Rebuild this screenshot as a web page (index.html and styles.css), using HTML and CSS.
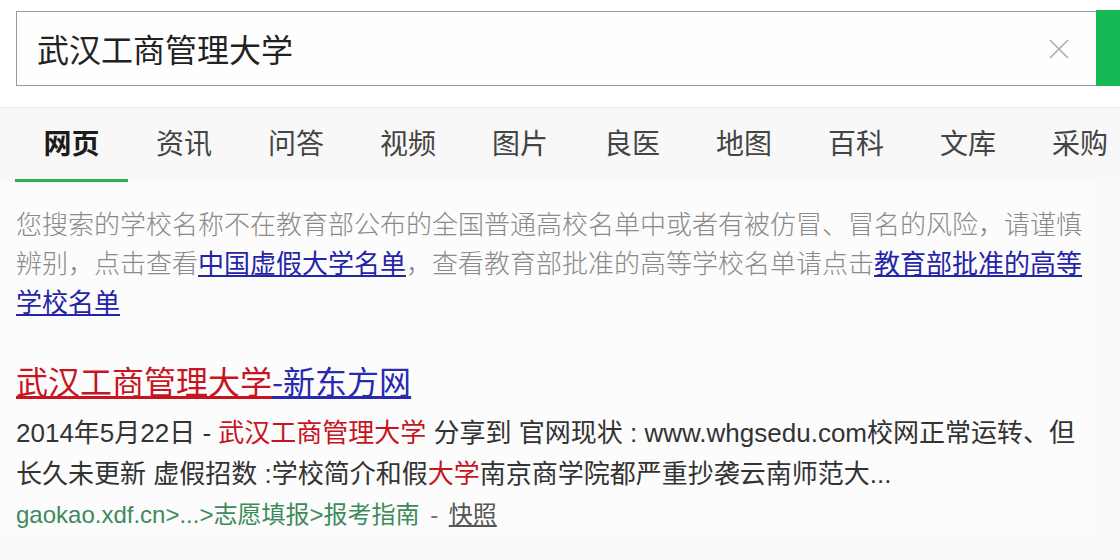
FILE: index.html
```html
<!DOCTYPE html>
<html lang="zh-CN">
<head>
  <meta charset="UTF-8" />
  <meta name="viewport" content="width=device-width, initial-scale=1" />
  <title>武汉工商管理大学 - 搜索</title>
  <link rel="stylesheet" href="styles.css">
</head>
<body>

  <div class="top">
    <div class="search">
      <div class="search-box">
        <span class="query">武汉工商管理大学</span>
        <svg class="clear" width="22" height="22" viewBox="0 0 22 22">
          <path d="M2 2 L20 20 M20 2 L2 20" stroke="#aaa" stroke-width="1.6" fill="none" />
        </svg>
      </div>
      <div class="search-btn"></div>
    </div>
  </div>

  <div class="tabs">
    <a class="tab active">网页</a>
    <a class="tab">资讯</a>
    <a class="tab">问答</a>
    <a class="tab">视频</a>
    <a class="tab">图片</a>
    <a class="tab">良医</a>
    <a class="tab">地图</a>
    <a class="tab">百科</a>
    <a class="tab">文库</a>
    <a class="tab">采购</a>
  </div>

  <div class="content">
    <p class="notice">
      您搜索的学校名称不在教育部公布的全国普通高校名单中或者有被仿冒、冒名的风险，请谨慎辨别，点击查看<a class="link">中国虚假大学名单</a>，查看教育部批准的高等学校名单请点击<a class="link">教育部批准的高等学校名单</a>
    </p>

    <div class="result">
      <a class="result-title"><em>武汉工商管理大学</em>-新东方网</a>
      <p class="snippet">
        2014年5月22日 - <em>武汉工商管理大学</em> 分享到 官网现状 : www.whgsedu.com校网正常运转、但长久未更新 虚假招数 :学校简介和假<em>大学</em>南京商学院都严重抄袭云南师范大...
      </p>
      <div class="source">
        <span class="url">gaokao.xdf.cn&gt;...&gt;志愿填报&gt;报考指南</span>
        <span class="dash">-</span>
        <a class="snapshot">快照</a>
      </div>
    </div>
  </div>

</body>
</html>
```

FILE: styles.css
```css
body {
  margin: 0;
  background: #fafafa;
  color: #333;
  font-family: "Liberation Sans", "Noto Sans CJK SC", sans-serif;
  overflow: hidden;
}

a {
  cursor: pointer;
}

.top {
  background: #fff;
  padding-top: 10px;
  height: 97px;
  border-bottom: 1px solid #ebebeb;
}

.search {
  display: flex;
  margin-left: 16px;
}

.search-box {
  box-sizing: border-box;
  width: 1080px;
  height: 75px;
  margin-top: 1px;
  border: 1px solid #9a9a9a;
  border-right: none;
  background: #fefefe;
  display: flex;
  align-items: center;
  justify-content: space-between;
  padding: 0 26px 0 20px;
}

.query {
  font-family: "Noto Sans CJK SC", sans-serif;
  font-size: 32px;
  color: #222;
  line-height: 40px;
  margin-top: -2px;
}

.clear {
  display: block;
}

.search-btn {
  width: 24px;
  height: 76px;
  background: #14b955;
}

.tabs {
  display: flex;
  padding-left: 15px;
  height: 74px;
  background: #f8f8f8;
}

.tab {
  flex-shrink: 0;
  width: 112px;
  box-sizing: border-box;
  text-align: center;
  font-family: "Noto Sans CJK SC", sans-serif;
  font-size: 28px;
  line-height: 32px;
  padding-top: 18px;
  color: #444;
}

.tab.active {
  color: #1b1b1b;
  font-weight: 700;
  border-bottom: 3px solid #2bb24c;
  width: 113px;
  height: 74px;
}

.content {
  padding: 0 0 0 16px;
  width: 1080px;
  background: #fcfcfc;
}

.notice {
  margin: 0;
  padding-top: 21px;
  font-family: "Noto Sans CJK SC", sans-serif;
  font-size: 26px;
  line-height: 39px;
  color: #8a8a8a;
  font-weight: 300;
}

.link {
  color: #2424a8;
  text-decoration: underline;
  font-weight: 400;
}

.result {
  padding-top: 40px;
}

.result-title {
  display: block;
  font-family: "Noto Sans CJK SC", sans-serif;
  font-size: 32px;
  line-height: 40px;
  color: #2a2ab0;
  text-decoration: underline;
}

.result-title em {
  font-style: normal;
  color: #c8141e;
  text-decoration: underline;
}

.snippet {
  margin: 13px 0 0;
  font-size: 26px;
  line-height: 41px;
  color: #333;
}

.snippet em {
  font-style: normal;
  color: #c8141e;
}

.source {
  font-size: 24px;
  line-height: 40px;
}

.url {
  color: #3e8a5a;
}

.dash {
  color: #777;
  margin: 0 4px;
}

.snapshot {
  color: #555;
  text-decoration: underline;
}
```
